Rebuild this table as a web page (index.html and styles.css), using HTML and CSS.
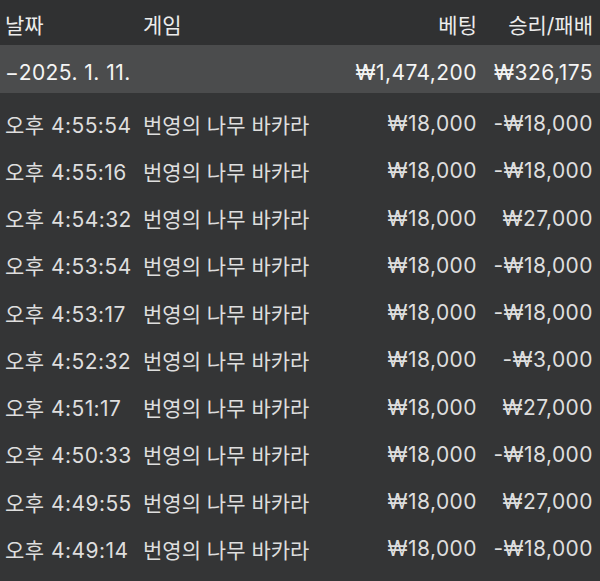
FILE: index.html
```html
<!DOCTYPE html>
<html lang="ko">
<head>
<meta charset="utf-8">
<link rel="stylesheet" href="styles.css">
</head>
<body>
<div class="table">
  <div class="row head">
    <span class="c-time">날짜</span><span class="c-game">게임</span><span class="c-bet">베팅</span><span class="c-res">승리/패배</span>
  </div>
  <div class="row date">
    <span class="c-time">−2025. 1. 11.</span><span class="c-game"></span><span class="c-bet">₩1,474,200</span><span class="c-res">₩326,175</span>
  </div>
  <div class="row"><span class="c-time">오후 4:55:54</span><span class="c-game">번영의 나무 바카라</span><span class="c-bet">₩18,000</span><span class="c-res">-₩18,000</span></div>
  <div class="row"><span class="c-time">오후 4:55:16</span><span class="c-game">번영의 나무 바카라</span><span class="c-bet">₩18,000</span><span class="c-res">-₩18,000</span></div>
  <div class="row"><span class="c-time">오후 4:54:32</span><span class="c-game">번영의 나무 바카라</span><span class="c-bet">₩18,000</span><span class="c-res">₩27,000</span></div>
  <div class="row"><span class="c-time">오후 4:53:54</span><span class="c-game">번영의 나무 바카라</span><span class="c-bet">₩18,000</span><span class="c-res">-₩18,000</span></div>
  <div class="row"><span class="c-time">오후 4:53:17</span><span class="c-game">번영의 나무 바카라</span><span class="c-bet">₩18,000</span><span class="c-res">-₩18,000</span></div>
  <div class="row"><span class="c-time">오후 4:52:32</span><span class="c-game">번영의 나무 바카라</span><span class="c-bet">₩18,000</span><span class="c-res">-₩3,000</span></div>
  <div class="row"><span class="c-time">오후 4:51:17</span><span class="c-game">번영의 나무 바카라</span><span class="c-bet">₩18,000</span><span class="c-res">₩27,000</span></div>
  <div class="row"><span class="c-time">오후 4:50:33</span><span class="c-game">번영의 나무 바카라</span><span class="c-bet">₩18,000</span><span class="c-res">-₩18,000</span></div>
  <div class="row"><span class="c-time">오후 4:49:55</span><span class="c-game">번영의 나무 바카라</span><span class="c-bet">₩18,000</span><span class="c-res">₩27,000</span></div>
  <div class="row"><span class="c-time">오후 4:49:14</span><span class="c-game">번영의 나무 바카라</span><span class="c-bet">₩18,000</span><span class="c-res">-₩18,000</span></div>
</div>
</body>
</html>
```
FILE: styles.css
```css
html, body {
  margin: 0;
  padding: 0;
  background: #343536;
}
body {
  width: 600px;
  height: 581px;
  overflow: hidden;
  font-family: Inter, "Noto Sans CJK KR", sans-serif;
  font-size: 21px;
  color: #dedede;
}
.table {
  display: flex;
  flex-direction: column;
}
.row {
  display: grid;
  grid-template-columns: 138px 1fr 160px 116px;
  align-items: center;
  box-sizing: border-box;
  height: 47.25px;
  padding: 14px 7px 0 5px;
  white-space: nowrap;
}
.head {
  height: 45px;
  padding-top: 2px;
  background: #303132;
  color: #ececec;
}
.date {
  height: 48px;
  padding-top: 6px;
  background: #4b4c4d;
  color: #f4f4f4;
}
.c-time, .c-bet, .c-res {
  letter-spacing: 0.45px;
}
.head .c-time, .head .c-bet, .head .c-res {
  letter-spacing: 0;
}
.c-bet, .c-res {
  text-align: right;
}
```
